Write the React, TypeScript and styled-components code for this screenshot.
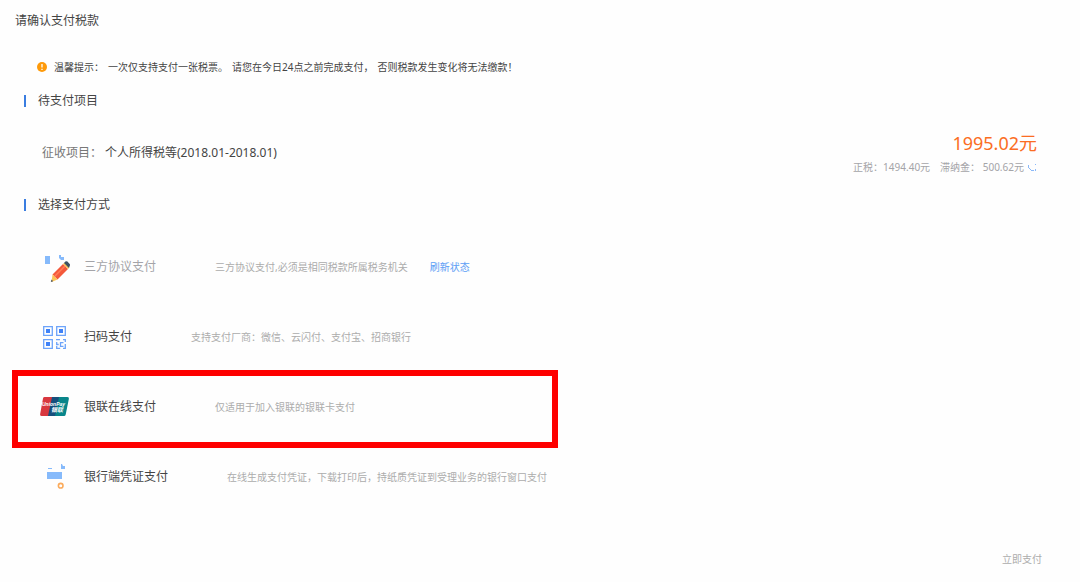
import React from "react";
import styled, { createGlobalStyle } from "styled-components";

const GlobalStyle = createGlobalStyle`
  *, *::before, *::after { box-sizing: border-box; }
  body {
    margin: 0;
    background: #fefefe;
    color: #444;
    font-family: "Noto Sans", "Noto Sans CJK SC", sans-serif;
    font-size: 12px;
    line-height: 20px;
  }
  h1, h2, p, ul, dl, dd { margin: 0; padding: 0; font: inherit; }
  button { border: 0; background: none; padding: 0; font: inherit; color: inherit; cursor: pointer; }
`;

const Page = styled.main`
  display: flex;
  flex-direction: column;
  padding: 11px 38px 8px 12px;
`;

const PageTitle = styled.h1`
  padding-left: 3px;
`;

const Notice = styled.p`
  display: flex;
  align-items: center;
  gap: 4px;
  margin: 26px 0 14px;
  padding-left: 25px;
  font-size: 10px;

  svg { margin-right: 3px; }
`;

const SectionTitle = styled.h2`
  display: flex;
  align-items: center;
  gap: 12px;
  padding-left: 12px;

  &::before {
    content: "";
    width: 2px;
    height: 12px;
    background: #3a7de0;
  }
`;

const Bill = styled.div`
  display: flex;
  justify-content: space-between;
  align-items: center;
  height: 84px;
  padding: 0 5px 0 30px;
`;

const BillItem = styled.dl`
  display: flex;
  gap: 3px;
  dt { color: #777; }
`;

const Totals = styled.div`
  display: flex;
  flex-direction: column;
  align-items: flex-end;
`;

const Amount = styled.strong`
  color: #fb6d23;
  font-size: 18px;
  font-weight: 400;
  line-height: 28px;
`;

const Breakdown = styled.div`
  display: flex;
  align-items: center;
  gap: 10px;
  color: #a4a4a8;
  font-size: 10px;
`;

const Refresh = styled.button`
  display: flex;
  margin-left: -7px;
`;

const Methods = styled.ul`
  list-style: none;
  margin-top: 17px;
`;

const Method = styled.li<{ $marked?: boolean }>`
  position: relative;
  display: flex;
  align-items: center;
  gap: 14px;
  height: 70px;
  padding-left: 26px;

  ${({ $marked }) =>
    $marked &&
    `&::after {
      content: "";
      position: absolute;
      left: 0;
      top: -2px;
      width: 546px;
      height: 78px;
      border: 6px solid #fe0000;
      pointer-events: none;
    }`}
`;

const MethodButton = styled.button<{ $muted?: boolean }>`
  display: flex;
  align-items: center;
  gap: 14px;
  margin-right: 45px;
  color: ${({ $muted }) => ($muted ? "#a4a4a8" : "#444")};
`;

const Description = styled.span`
  color: #acacac;
  font-size: 10px;
`;

const StatusLink = styled.a`
  margin-left: 8px;
  color: #5b9df5;
  font-size: 10px;
  text-decoration: none;
`;

const Footer = styled.footer`
  display: flex;
  justify-content: flex-end;
  margin-top: 37px;
`;

const PayButton = styled.button`
  color: #acacac;
  font-size: 10px;
`;

const AlertIcon = () => (
  <svg width="10" height="10" viewBox="0 0 10 10" aria-hidden="true">
    <circle cx="5" cy="5" r="5" fill="#fe9a0a" />
    <path d="M5 2v3.5M5 6.8v1.2" stroke="#fff" strokeWidth="1.3" />
  </svg>
);

const RefreshIcon = () => (
  <svg width="10" height="10" viewBox="0 0 10 10" aria-hidden="true">
    <path d="M1.500 3v3M2 6.500h1M3 7.500h1M4 8.500h3M8.500 2v1M8.500 7v2" stroke="#8ab8f8" fill="none" />
  </svg>
);

const AgreementIcon = () => (
  <svg width="32" height="32" viewBox="0 0 32 32" aria-hidden="true">
    <path d="M7 5h5v8H7zM21 4h2v2h3v3h-3l-2-2z" fill="#86bafb" />
    <path d="M14.500 23.500 25 13l5 5-10.500 10.500z" fill="#f4593b" />
    <path d="m16.500 25.500 11-11" stroke="#ff7c57" strokeWidth="1.500" />
    <path d="m14.500 23.500 5 5-6 2.500z" fill="#fbc456" />
    <path d="m13.500 28.500 1.700 1.700-2.400 .8z" fill="#48545f" />
    <path d="m25 13 1.300-1.300 5 5L30 18z" fill="#fbc456" />
    <path d="m26 12 1.400-1.400q1-.7 2 0l2.300 2.300q.7 1 0 2L31 17z" fill="#3c5263" />
  </svg>
);

const ScanIcon = () => (
  <svg width="32" height="32" viewBox="0 0 32 32" aria-hidden="true">
    <g fill="none" stroke="#6da4fa" strokeWidth="1.300">
      <path d="M5.700 5.700h8.600v8.600H5.700zM18.700 5.700h8.600v8.600h-8.600zM5.700 18.700h8.600v8.600H5.700z" />
      <path d="M18 18.700h4M18.700 21v2.500h2M18.700 25v2.300h3.500M25 18.700h2.300V21M25.500 21.700h-3v3.600h3M27.300 23v4.300H25" />
    </g>
    <path d="M8 8h4v4H8zM21 8h4v4h-4zM8 21h4v4H8z" fill="#3f82f7" />
  </svg>
);

const UnionPayIcon = () => (
  <svg width="32" height="32" viewBox="0 0 32 32" role="img" aria-label="UnionPay">
    <path d="M6.500 6H15l-4 19H3.500q-1.800 0-1.400-1.800L5 7.400Q5.300 6 6.500 6z" fill="#d8373f" />
    <path d="M14 6h8l-4 19h-8z" fill="#174f7c" />
    <path d="M21 6h8.500q1.700 0 1.400 1.700l-3.200 15.800Q27.400 25 26 25h-9z" fill="#08858a" />
    <g fill="#fff" fontStyle="italic" fontWeight="700" fontFamily="Liberation Sans, Noto Sans CJK SC, sans-serif">
      <text x="4" y="15" fontSize="5">UnionPay</text>
      <text x="13" y="21" fontSize="6">银联</text>
    </g>
  </svg>
);

const VoucherIcon = () => (
  <svg width="32" height="32" viewBox="0 0 32 32" aria-hidden="true">
    <path d="M10 7h4v1h-4zM23 3h1l1 2h2v3h-4zM9 11h15v7H9z" fill="#86bafb" />
    <circle cx="22.700" cy="24.700" r="2.300" fill="none" stroke="#fbab5c" strokeWidth="1.600" />
  </svg>
);

const methods = [
  {
    name: "三方协议支付",
    text: "三方协议支付,必须是相同税款所属税务机关",
    icon: <AgreementIcon />,
    muted: true,
    link: "刷新状态",
  },
  { name: "扫码支付", text: "支持支付厂商：微信、云闪付、支付宝、招商银行", icon: <ScanIcon /> },
  { name: "银联在线支付", text: "仅适用于加入银联的银联卡支付", icon: <UnionPayIcon />, marked: true },
  {
    name: "银行端凭证支付",
    text: "在线生成支付凭证，下载打印后，持纸质凭证到受理业务的银行窗口支付",
    icon: <VoucherIcon />,
  },
];

export default function App() {
  return (
    <>
      <GlobalStyle />
      <Page lang="zh-CN">
        <PageTitle>请确认支付税款</PageTitle>
        <Notice>
          <AlertIcon />
          <span>温馨提示：</span>
          <span>一次仅支持支付一张税票。</span>
          <span>请您在今日24点之前完成支付，</span>
          <span>否则税款发生变化将无法缴款！</span>
        </Notice>
        <SectionTitle>待支付项目</SectionTitle>
        <Bill>
          <BillItem>
            <dt>征收项目：</dt>
            <dd>个人所得税等(2018.01-2018.01)</dd>
          </BillItem>
          <Totals>
            <Amount>1995.02元</Amount>
            <Breakdown>
              <span>正税：1494.40元</span>
              <span>滞纳金： 500.62元</span>
              <Refresh type="button" aria-label="刷新">
                <RefreshIcon />
              </Refresh>
            </Breakdown>
          </Totals>
        </Bill>
        <SectionTitle>选择支付方式</SectionTitle>
        <Methods>
          {methods.map((m) => (
            <Method key={m.name} $marked={m.marked}>
              <MethodButton type="button" $muted={m.muted}>
                {m.icon}
                {m.name}
              </MethodButton>
              <Description>{m.text}</Description>
              {m.link && <StatusLink href="#status">{m.link}</StatusLink>}
            </Method>
          ))}
        </Methods>
        <Footer>
          <PayButton type="button">立即支付</PayButton>
        </Footer>
      </Page>
    </>
  );
}
